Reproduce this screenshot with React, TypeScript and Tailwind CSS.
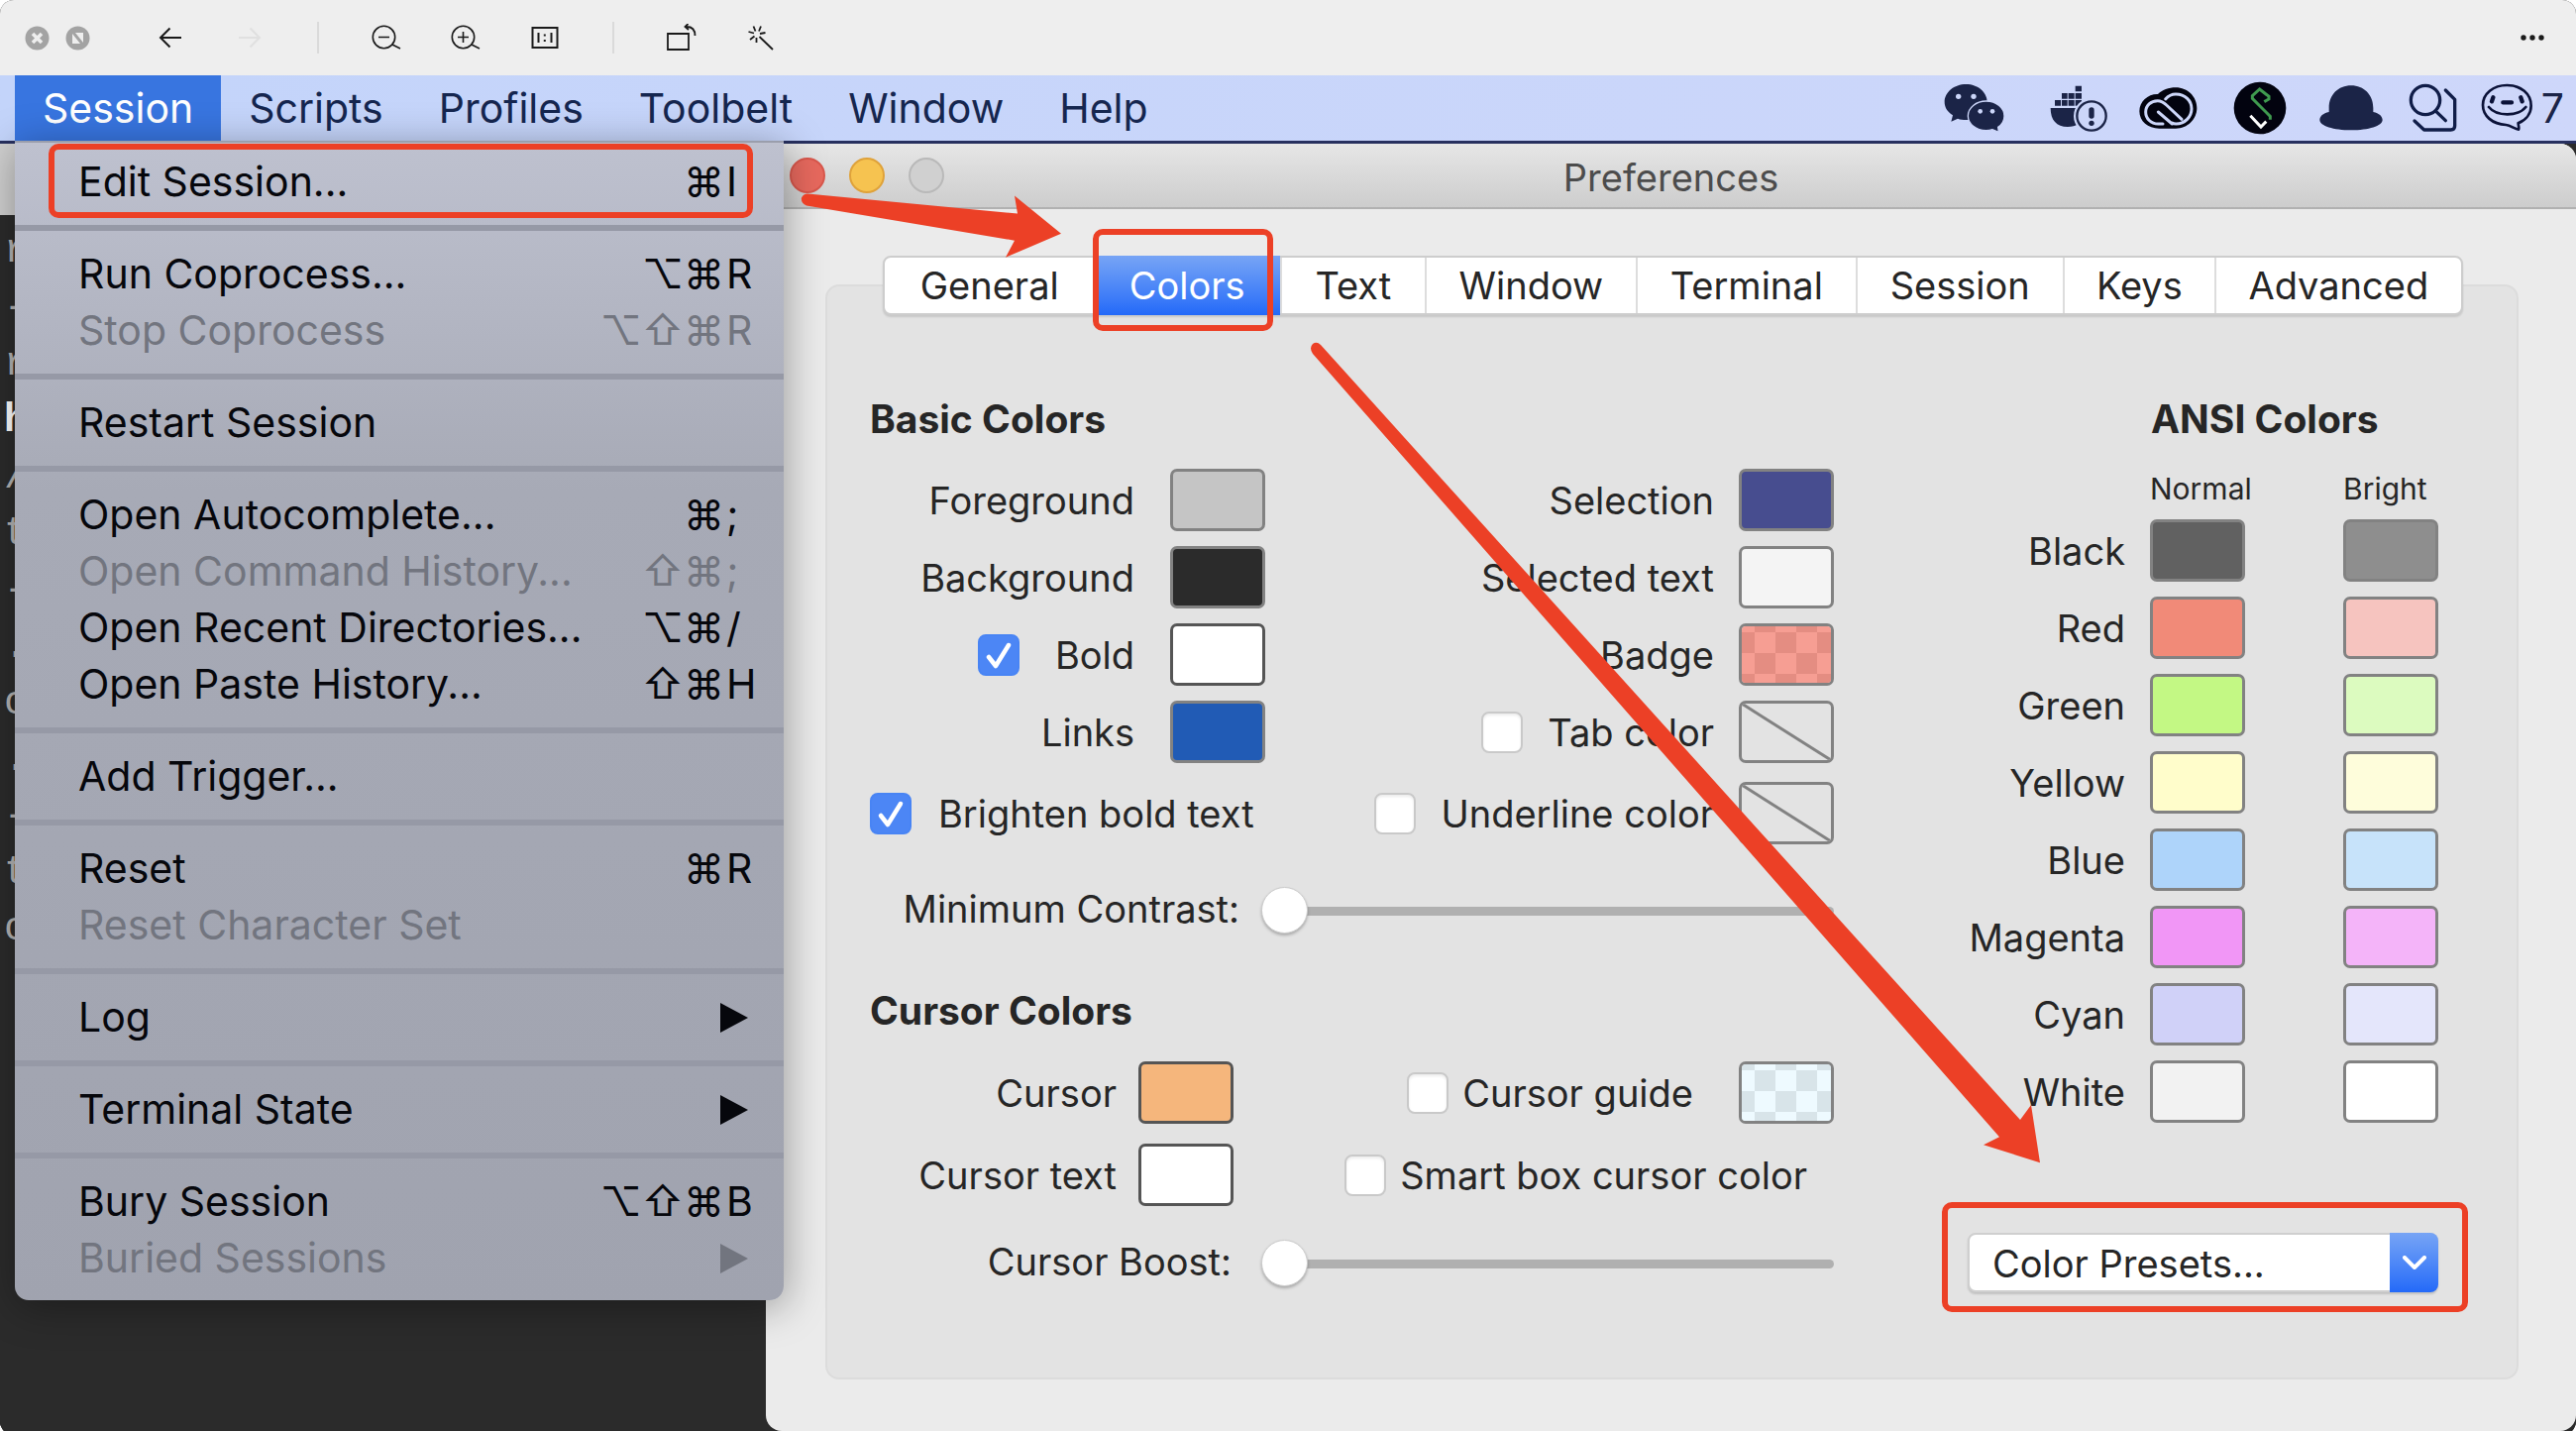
import React, { useState } from 'react';

const menuBarItems = ['Session', 'Scripts', 'Profiles', 'Toolbelt', 'Window', 'Help'];

type MenuEntry = {
  label: string;
  mods?: string;
  char?: string;
  disabled?: boolean;
  submenu?: boolean;
  marked?: boolean;
};

const menuGroups: MenuEntry[][] = [
  [{ label: 'Edit Session...', mods: '⌘', char: 'I', marked: true }],
  [
    { label: 'Run Coprocess...', mods: '⌥⌘', char: 'R' },
    { label: 'Stop Coprocess', mods: '⌥⇧⌘', char: 'R', disabled: true },
  ],
  [{ label: 'Restart Session' }],
  [
    { label: 'Open Autocomplete...', mods: '⌘', char: ';' },
    { label: 'Open Command History...', mods: '⇧⌘', char: ';', disabled: true },
    { label: 'Open Recent Directories...', mods: '⌥⌘', char: '/' },
    { label: 'Open Paste History...', mods: '⇧⌘', char: 'H' },
  ],
  [{ label: 'Add Trigger...' }],
  [
    { label: 'Reset', mods: '⌘', char: 'R' },
    { label: 'Reset Character Set', disabled: true },
  ],
  [{ label: 'Log', submenu: true }],
  [{ label: 'Terminal State', submenu: true }],
  [
    { label: 'Bury Session', mods: '⌥⇧⌘', char: 'B' },
    { label: 'Buried Sessions', disabled: true, submenu: true },
  ],
];

const terminalLines = ['r', '-', 'r', 'h', '/', 't', '-', '.', 'c', '.', '-', 't', 'c'];

const tabs = ['General', 'Colors', 'Text', 'Window', 'Terminal', 'Session', 'Keys', 'Advanced'];

const ansiColors = [
  { name: 'Black', normal: 'bg-[#616161]', bright: 'bg-[#8e8e8e]' },
  { name: 'Red', normal: 'bg-[#f18a78]', bright: 'bg-[#f6c4bf]' },
  { name: 'Green', normal: 'bg-[#c3f884]', bright: 'bg-[#dcfbbf]' },
  { name: 'Yellow', normal: 'bg-[#fffdcb]', bright: 'bg-[#fefddb]' },
  { name: 'Blue', normal: 'bg-[#aed4fa]', bright: 'bg-[#c7e3fa]' },
  { name: 'Magenta', normal: 'bg-[#f196f6]', bright: 'bg-[#f4b4f9]' },
  { name: 'Cyan', normal: 'bg-[#d0d1f8]', bright: 'bg-[#e4e6fb]' },
  { name: 'White', normal: 'bg-[#f2f2f2]', bright: 'bg-white' },
];

function ToolButton({ label, children }: { label: string; children: React.ReactNode }) {
  return (
    <button aria-label={label} className="flex h-10 w-20 items-center justify-center">
      {children}
    </button>
  );
}

function ViewerToolbar() {
  return (
    <header className="flex h-[76px] items-center bg-[#eeeeee] pl-[25px] pr-[26px] text-[#1a1a1a]">
      <div className="flex w-[107px] gap-4">
        <button aria-label="Close">
          <svg width="25" height="25" viewBox="0 0 25 25">
            <circle cx="12.5" cy="12.5" r="12" fill="#a3a3a3" />
            <path d="M8 8l9 9M17 8l-9 9" stroke="#eee" strokeWidth="3.6" />
          </svg>
        </button>
        <button aria-label="Full screen">
          <svg width="25" height="25" viewBox="0 0 25 25">
            <circle cx="12.5" cy="12.5" r="12" fill="#a3a3a3" />
            <path d="M10 7h8v10zM7 8v10h8z" fill="#eee" />
          </svg>
        </button>
      </div>
      <ToolButton label="Back">
        <svg width="24" height="22" viewBox="0 0 24 22" fill="none" stroke="currentColor" strokeWidth="2">
          <path d="M23 11H2M11.500 1.500L2 11l9.500 9.500" />
        </svg>
      </ToolButton>
      <ToolButton label="Forward">
        <svg width="24" height="22" viewBox="0 0 24 22" fill="none" stroke="#e0e0e0" strokeWidth="2">
          <path d="M1 11h21M12.500 1.500L22 11l-9.500 9.500" />
        </svg>
      </ToolButton>
      <span className="mx-7 h-8 w-0.5 bg-[#dadada]" />
      <ToolButton label="Zoom out">
        <svg width="30" height="26" viewBox="0 0 30 26" fill="none" stroke="currentColor" strokeWidth="1.600">
          <circle cx="12.500" cy="12.500" r="11.200" />
          <path d="M7 12.500h11M21 20l8 4" />
        </svg>
      </ToolButton>
      <ToolButton label="Zoom in">
        <svg width="30" height="26" viewBox="0 0 30 26" fill="none" stroke="currentColor" strokeWidth="1.600">
          <circle cx="12.500" cy="12.500" r="11.200" />
          <path d="M7 12.500h11M12.500 7v11M21 20l8 4" />
        </svg>
      </ToolButton>
      <ToolButton label="Actual size">
        <svg width="28" height="24" viewBox="0 0 28 24" fill="none" stroke="currentColor" strokeWidth="2">
          <path d="M1.500 2h25v20h-25zM7.500 7v10M20.500 7v10M13.800 8.500v2M13.800 14v2" />
        </svg>
      </ToolButton>
      <span className="mx-7 h-8 w-0.5 bg-[#dadada]" />
      <ToolButton label="Rotate">
        <svg width="32" height="28" viewBox="0 0 32 28" fill="none" stroke="currentColor" strokeWidth="1.800">
          <path d="M2 10h21v16H2zM21 3c5 0 8.500 3 8.500 9M22.500 0L19.500 3l3.500 3" />
        </svg>
      </ToolButton>
      <ToolButton label="Enhance">
        <svg width="28" height="28" viewBox="0 0 28 28" fill="none" stroke="currentColor" strokeWidth="1.800">
          <path d="M12.500 13L26 26M6.500 2.500L8.500 7.500M14 2.500L12 7.500M1.500 8l5.500 1.500M18.500 9L13 10M3 16l4.500-3.500M9.500 19v-5" />
        </svg>
      </ToolButton>
      <button aria-label="More" className="ml-auto flex h-10 w-9 items-center justify-center">
        <svg width="24" height="6" viewBox="0 0 24 6" fill="currentColor">
          <circle cx="3" cy="3" r="2.700" />
          <circle cx="12" cy="3" r="2.700" />
          <circle cx="21" cy="3" r="2.700" />
        </svg>
      </button>
    </header>
  );
}

function StatusIcons() {
  return (
    <div className="ml-auto flex items-center pr-3 text-[#1b2447]">
      <svg className="mr-[45px]" width="62" height="50" viewBox="36 42 186 150" role="img" aria-label="WeChat">
        <path
          d="M103 45c36 0 64 24 64 54s-28 54-64 54c-9 0-17-1-25-4l-20 9 5-19C47 129 38 115 38 99c0-30 29-54 65-54z"
          fill="currentColor"
        />
        <circle cx="80" cy="82" r="8" fill="#ccd6f9" />
        <circle cx="126" cy="82" r="8" fill="#ccd6f9" />
        <path
          d="M164 96c31 0 55 20 55 45 0 14-7 26-19 34l2 15-19-8c-6 2-12 3-19 3-31 0-55-20-55-44s24-45 55-45z"
          fill="currentColor"
          stroke="#ccd6f9"
          strokeWidth="4"
        />
        <circle cx="146" cy="127" r="7" fill="#ccd6f9" />
        <circle cx="183" cy="127" r="7" fill="#ccd6f9" />
      </svg>
      <svg className="mr-[31px]" width="59" height="50" viewBox="356 47 177 150" role="img" aria-label="Docker">
        <path
          d="M433 55h19v17h-19zM392 77h17v17h-17zM412 77h18v17h-18zM433 77h19v17h-19zM371 98h18v17h-18zM392 98h17v17h-17zM412 98h18v17h-18zM433 98h19v17h-19zM358 122h86v48c-10 6-22 9-34 9-34 0-52-20-52-57z"
          fill="currentColor"
        />
        <circle cx="482" cy="146" r="54" fill="#ccd6f9" />
        <circle cx="482" cy="146" r="44" fill="none" stroke="currentColor" strokeWidth="7" />
        <path d="M482 128v18" stroke="currentColor" strokeWidth="16" strokeLinecap="round" />
        <circle cx="482" cy="168" r="8" fill="currentColor" />
      </svg>
      <svg className="mr-9" width="59" height="50" viewBox="626 35 177 150" role="img" aria-label="Creative Cloud">
        <path
          d="M683 68c12-12 33-20 54-20 36 0 64 28 64 62s-28 62-64 62h-50c-34 0-60-22-60-52s26-53 56-52z"
          fill="#02030f"
        />
        <path
          d="M684 122l42 36M698 158h-14c-22 0-38-16-38-36s16-34 36-34c10 0 18 4 27 13l46 43M706 83c8-9 19-15 31-15 29 0 48 20 48 44s-20 46-47 46c-5 0-9-1-12-3"
          fill="none"
          stroke="#ccd6f9"
          strokeWidth="9"
          strokeLinecap="round"
          strokeLinejoin="round"
        />
      </svg>
      <svg className="mr-[33px]" width="54" height="54" viewBox="0 0 162 162" role="img" aria-label="Sync">
        <circle cx="81" cy="81" r="79" fill="#02030f" />
        <path d="M112 116V106L58 52V44L80 24L108 46V54L94 62" fill="none" stroke="#3f9a4f" strokeWidth="9" />
        <path d="M52 104l32 34 16-16" fill="none" stroke="#fff" strokeWidth="9" />
      </svg>
      <svg className="mr-[26px]" width="64" height="46" viewBox="198 53 192 138" role="img" aria-label="Bartender">
        <path
          d="M227 134v-12c0-40 28-68 67-68s67 28 67 68v12c18 4 28 13 28 24 0 18-42 31-95 31s-95-13-95-31c0-11 10-20 28-24z"
          fill="currentColor"
        />
      </svg>
      <svg
        className="mr-6"
        width="49"
        height="50"
        viewBox="468 42 147 150"
        fill="none"
        stroke="#101d48"
        strokeWidth="10"
        strokeLinecap="round"
        role="img"
        aria-label="Search"
      >
        <circle cx="519" cy="93" r="44" />
        <path d="M551 127l29 28M580 63l28 28v80q0 12-12 12h-81l-29-27" strokeLinejoin="round" />
      </svg>
      <svg
        width="53"
        height="50"
        viewBox="688 42 159 150"
        fill="none"
        stroke="#0b1238"
        strokeWidth="8"
        role="img"
        aria-label="Messages"
      >
        <path d="M801 163c24-10 39-30 39-53 0-36-31-62-73-62s-73 26-73 60c0 33 29 58 70 60 14 1 27 13 38 14 3-5-1-12-1-19z" />
        <path d="M712 114c12 15 30 22 56 22s44-7 56-22" strokeLinecap="round" />
        <path d="M755 100h26M725 85l-4 12M809 85l4 12" strokeWidth="13" strokeLinecap="round" />
      </svg>
      <span className="ml-2 text-[41px] leading-[48px]">7</span>
    </div>
  );
}

function MenuBar() {
  return (
    <nav className="flex h-[69px] items-stretch border-b-[3px] border-[#27305f] bg-linear-to-r from-[#c3d4fa] to-[#ced7fa] pl-[15px] text-[41px] leading-[48px] text-[#15264f]">
      {menuBarItems.map((item, i) => (
        <button key={item} className={i === 0 ? 'bg-[#3875e0] px-7 text-white' : 'px-7'}>
          {item}
        </button>
      ))}
      <StatusIcons />
    </nav>
  );
}

function SessionMenu() {
  return (
    <div
      role="menu"
      className="absolute left-[15px] top-[142px] z-20 w-[776px] rounded-b-[14px] border-t-2 border-[#9a9eac] bg-linear-to-b from-[#bec1cf] via-[#a7aab6] via-30% to-[#a0a3af] pb-3.5 pt-[11px] text-[41px] leading-[57px] text-[#06070c] shadow-[2px_6px_40px_rgba(0,0,0,0.35)]"
    >
      {menuGroups.map((group, gi) => (
        <React.Fragment key={group[0].label}>
          {gi > 0 && (
            <div role="separator" className="py-[15px]">
              <div className="h-1.5 bg-[#9699a6]" />
            </div>
          )}
          {group.map((entry) => (
            <button
              key={entry.label}
              role="menuitem"
              disabled={entry.disabled}
              className="relative flex h-[57px] w-full items-center whitespace-nowrap pl-16 pr-6 text-left disabled:text-[#72757f]"
            >
              {entry.label}
              {entry.mods && <span className="ml-auto">{entry.mods}</span>}
              {entry.char && <span className="ml-0.5 w-[34px]">{entry.char}</span>}
              {entry.submenu && (
                <svg className="ml-auto mr-3" width="28" height="30" viewBox="0 0 28 30" fill="currentColor">
                  <path d="M0 0l28 15L0 30z" />
                </svg>
              )}
              {entry.marked && (
                <span className="pointer-events-none absolute -bottom-2 -top-2.5 left-[34px] right-[31px] rounded-[10px] border-[6px] border-[#ec4026]" />
              )}
            </button>
          ))}
        </React.Fragment>
      ))}
    </div>
  );
}

function Terminal() {
  return (
    <div className="w-[773px] shrink-0 overflow-hidden bg-[#2b2b2b] font-['Liberation_Mono'] text-[40px] text-[#b4b4b4]">
      <div className="h-[72px] bg-[#cfcfcf]" />
      <div className="pl-1 pt-2 leading-[57px]">
        {terminalLines.map((line, i) => (
          <div key={i} className={line === 'h' ? 'font-bold text-white' : ''}>
            {line}
          </div>
        ))}
      </div>
    </div>
  );
}

function Swatch({ label, tone }: { label: string; tone: string }) {
  return (
    <button
      aria-label={label}
      className={`block h-[63px] w-24 shrink-0 overflow-hidden rounded-[7px] border-[3px] ${tone}`}
    />
  );
}

function EmptySwatch({ label }: { label: string }) {
  return (
    <button aria-label={label} className="block h-[63px] w-24 shrink-0 overflow-hidden rounded-[7px] border-[3px] border-[#828282]">
      <svg className="h-full w-full" viewBox="0 0 90 57" preserveAspectRatio="none">
        <path d="M0 0L90 57" stroke="#828282" strokeWidth="3" />
      </svg>
    </button>
  );
}

function CheckerSwatch({ label, even, odd }: { label: string; even: string; odd: string }) {
  const cells = [0, 1, 2, 3, 4].flatMap((c) =>
    [0, 1, 2, 3].filter((r) => (c + r) % 2 === 1).map((r) => ({ x: c * 21 - 8, y: r * 21 - 15 })),
  );
  return (
    <button aria-label={label} className="block h-[63px] w-24 shrink-0 overflow-hidden rounded-[7px] border-[3px] border-[#828282]">
      <svg className="h-full w-full" viewBox="0 0 90 57">
        <rect width="90" height="57" fill={even} />
        {cells.map((c) => (
          <rect key={`${c.x}-${c.y}`} x={c.x} y={c.y} width="21" height="21" fill={odd} />
        ))}
      </svg>
    </button>
  );
}

function CheckBox({ id, checked = false }: { id: string; checked?: boolean }) {
  return (
    <span className="relative block h-[42px] w-[42px] shrink-0">
      <input
        id={id}
        type="checkbox"
        defaultChecked={checked}
        className="peer block h-full w-full appearance-none rounded-lg border-2 border-[#c9c9c9] bg-white shadow-[inset_0_2px_3px_rgba(0,0,0,0.08)] checked:border-[#4884f4] checked:bg-[#4c86f5] checked:shadow-none"
      />
      <svg
        className="pointer-events-none absolute inset-0 hidden peer-checked:block"
        viewBox="0 0 42 42"
        fill="none"
        stroke="#fff"
        strokeWidth="4.500"
        strokeLinecap="round"
        strokeLinejoin="round"
      >
        <path d="M11 23l7 9L31 11" />
      </svg>
    </span>
  );
}

function Slider({ id }: { id: string }) {
  return (
    <input
      id={id}
      type="range"
      defaultValue={0}
      className="h-12 min-w-0 flex-1 appearance-none bg-transparent [&::-webkit-slider-runnable-track]:h-[9px] [&::-webkit-slider-runnable-track]:rounded-full [&::-webkit-slider-runnable-track]:bg-[#b0b0b0] [&::-webkit-slider-thumb]:-mt-5 [&::-webkit-slider-thumb]:h-[47px] [&::-webkit-slider-thumb]:w-[47px] [&::-webkit-slider-thumb]:appearance-none [&::-webkit-slider-thumb]:rounded-full [&::-webkit-slider-thumb]:border [&::-webkit-slider-thumb]:border-[#cccccc] [&::-webkit-slider-thumb]:bg-white [&::-webkit-slider-thumb]:shadow-[0_2px_3px_rgba(0,0,0,0.25)]"
    />
  );
}

const rowClass = 'flex h-[63px] items-center justify-end';
const headingClass = 'text-[39px] font-bold leading-[48px]';
const sliderLabelClass = 'w-[373px] whitespace-nowrap pb-1 text-right leading-[44px]';

function BasicColors() {
  return (
    <section>
      <h2 className={headingClass}>Basic Colors</h2>
      <div className="mt-[26px] flex justify-between">
        <div className="flex w-[399px] flex-col gap-[15px]">
          <div className={`${rowClass} gap-9`}>
            <span>Foreground</span>
            <Swatch label="Foreground" tone="border-[#828282] bg-[#c5c5c5]" />
          </div>
          <div className={`${rowClass} gap-9`}>
            <span>Background</span>
            <Swatch label="Background" tone="border-[#828282] bg-[#2b2b2b]" />
          </div>
          <div className={`${rowClass} gap-9`}>
            <CheckBox id="bold" checked />
            <label htmlFor="bold">Bold</label>
            <Swatch label="Bold" tone="border-[#555555] bg-white" />
          </div>
          <div className={`${rowClass} gap-9`}>
            <span>Links</span>
            <Swatch label="Links" tone="border-[#828282] bg-[#215bb5]" />
          </div>
          <div className="mt-1 flex h-[63px] items-center gap-[27px] whitespace-nowrap">
            <CheckBox id="brighten" checked />
            <label htmlFor="brighten">Brighten bold text</label>
          </div>
        </div>
        <div className="flex flex-col gap-[15px]">
          <div className={`${rowClass} gap-[25px]`}>
            <span>Selection</span>
            <Swatch label="Selection" tone="border-[#828282] bg-[#474d8f]" />
          </div>
          <div className={`${rowClass} gap-[25px]`}>
            <span>Selected text</span>
            <Swatch label="Selected text" tone="border-[#828282] bg-[#f4f4f4]" />
          </div>
          <div className={`${rowClass} gap-[25px]`}>
            <span>Badge</span>
            <CheckerSwatch label="Badge" even="#f69e93" odd="#e48d82" />
          </div>
          <div className={`${rowClass} gap-[25px]`}>
            <CheckBox id="tab-color" />
            <label htmlFor="tab-color">Tab color</label>
            <EmptySwatch label="Tab color" />
          </div>
          <div className={`${rowClass} mt-1 gap-[25px]`}>
            <CheckBox id="underline-color" />
            <label htmlFor="underline-color">Underline color</label>
            <EmptySwatch label="Underline color" />
          </div>
        </div>
      </div>
      <div className="mt-[43px] flex items-center gap-[22px]">
        <label htmlFor="contrast" className={sliderLabelClass}>
          Minimum Contrast:
        </label>
        <Slider id="contrast" />
      </div>
    </section>
  );
}

function CursorColors() {
  return (
    <section className="mt-[53px]">
      <h2 className={headingClass}>Cursor Colors</h2>
      <div className="mt-[27px] flex justify-between">
        <div className="flex w-[367px] flex-col gap-5">
          <div className={`${rowClass} gap-[22px]`}>
            <span>Cursor</span>
            <Swatch label="Cursor" tone="border-[#555555] bg-[#f5b67c]" />
          </div>
          <div className={`${rowClass} gap-[22px]`}>
            <span>Cursor text</span>
            <Swatch label="Cursor text" tone="border-[#555555] bg-white" />
          </div>
        </div>
        <div className="flex flex-col gap-5">
          <div className={`${rowClass} gap-3.5`}>
            <CheckBox id="cursor-guide" />
            <label htmlFor="cursor-guide" className="mr-8">
              Cursor guide
            </label>
            <CheckerSwatch label="Cursor guide" even="#d8e4e9" odd="#eefaff" />
          </div>
          <div className={`${rowClass} gap-3.5 pr-[27px]`}>
            <CheckBox id="smart-box" />
            <label htmlFor="smart-box">Smart box cursor color</label>
          </div>
        </div>
      </div>
      <div className="mt-[34px] flex items-center gap-[22px]">
        <label htmlFor="boost" className={`${sliderLabelClass} pr-2`}>
          Cursor Boost:
        </label>
        <Slider id="boost" />
      </div>
    </section>
  );
}

function AnsiColors() {
  return (
    <section>
      <h2 className={`${headingClass} whitespace-nowrap pl-[185px]`}>ANSI Colors</h2>
      <table className="mt-7 w-full table-fixed border-collapse">
        <colgroup>
          <col />
          <col className="w-[195px]" />
          <col className="w-24" />
        </colgroup>
        <thead className="text-left text-[30px] leading-9">
          <tr>
            <td className="p-0" />
            <th scope="col" className="p-0 pb-[13px] font-normal">
              Normal
            </th>
            <th scope="col" className="p-0 pb-[13px] font-normal">
              Bright
            </th>
          </tr>
        </thead>
        <tbody>
          {ansiColors.map((c) => (
            <tr key={c.name}>
              <th scope="row" className="p-0 pb-[15px] pr-[25px] text-right font-normal">
                {c.name}
              </th>
              <td className="p-0 pb-[15px]">
                <Swatch label={`${c.name} normal`} tone={`border-[#828282] ${c.normal}`} />
              </td>
              <td className="p-0 pb-[15px]">
                <Swatch label={`${c.name} bright`} tone={`border-[#828282] ${c.bright}`} />
              </td>
            </tr>
          ))}
        </tbody>
      </table>
      <div className="relative mt-24">
        <select
          aria-label="Color presets"
          className="block h-[60px] w-full appearance-none rounded-lg border-2 border-[#cfcfcf] bg-white pl-[23px] pt-0.5 shadow-[0_2px_2px_rgba(0,0,0,0.15)]"
        >
          <option>Color Presets...</option>
        </select>
        <span className="pointer-events-none absolute inset-y-0 right-0 flex w-[49px] items-center justify-center rounded-r-lg bg-linear-to-b from-[#77a4f5] to-[#2369f8]">
          <svg width="24" height="14" viewBox="0 0 24 14" fill="none" stroke="#fff" strokeWidth="4" strokeLinecap="round" strokeLinejoin="round">
            <path d="M2 2l10 10L22 2" />
          </svg>
        </span>
        <span className="pointer-events-none absolute -bottom-5 -left-[26px] -right-[30px] -top-[31px] rounded-[10px] border-[6px] border-[#ec4026]" />
      </div>
    </section>
  );
}

function TabBar() {
  const [active, setActive] = useState('Colors');
  return (
    <div
      role="tablist"
      className="relative z-10 ml-[118px] mr-[114px] mt-[47px] grid h-[60px] grid-cols-[212fr_188fr_146fr_214fr_222fr_210fr_153fr_250fr] rounded-lg border-2 border-[#cdcdcd] bg-white shadow-[0_2px_2px_rgba(0,0,0,0.12)]"
    >
      {tabs.map((tab) => (
        <button
          key={tab}
          role="tab"
          aria-selected={tab === active}
          onClick={() => setActive(tab)}
          className={
            tab === active
              ? 'relative -my-0.5 bg-linear-to-b from-[#77a4f5] to-[#2369f8] text-white'
              : 'relative border-l-2 border-[#dddddd] first:border-l-0'
          }
        >
          {tab}
          {tab === active && (
            <span className="pointer-events-none absolute -bottom-4 -left-px -top-[27px] right-[7px] rounded-[10px] border-[6px] border-[#ec4026]" />
          )}
        </button>
      ))}
    </div>
  );
}

function PreferencesWindow() {
  return (
    <main className="mb-1 min-w-0 flex-1 rounded-2xl bg-[#ebebeb] pb-[52px] text-[38px] leading-[48px] text-[#262626]">
      <div className="grid h-[66px] grid-cols-[1fr_auto_1fr] items-center rounded-tr-2xl border-b-2 border-[#b1b1b1] bg-linear-to-b from-[#e6e6e6] to-[#cdcdcd] px-6">
        <div className="flex gap-6">
          <button aria-label="Close window" className="h-9 w-9 rounded-full border-2 border-[#d9574c] bg-[#e7695e]" />
          <button aria-label="Minimize window" className="h-9 w-9 rounded-full border-2 border-[#dfa23a] bg-[#f6c350]" />
          <button aria-label="Zoom window" className="h-9 w-9 rounded-full border-2 border-[#b9b9b9] bg-[#d0d0d0]" />
        </div>
        <h1 className="pt-1 text-[#4c4c4c]">Preferences</h1>
      </div>
      <TabBar />
      <div className="-mt-[31px] ml-[60px] mr-[58px] grid grid-cols-[973fr_475fr] gap-[135px] rounded-[14px] border-2 border-[#dcdcdc] bg-[#e3e3e3] pb-[86px] pl-[43px] pr-[79px] pt-[110px]">
        <div>
          <BasicColors />
          <CursorColors />
        </div>
        <AnsiColors />
      </div>
    </main>
  );
}

function Arrows() {
  return (
    <svg
      aria-hidden="true"
      className="pointer-events-none absolute inset-0 z-30 h-full w-full"
      viewBox="0 0 2600 1444"
      preserveAspectRatio="none"
      fill="#ec4026"
    >
      <path d="M815 195L1027 215L1024 197L1071 235L1015 259L1024 242L814 207Q808 204 809 199Q811 195 815 195z" />
      <path d="M1333 347L2039 1127L2050 1112L2059 1170L2002 1152L2018 1144L1325 356Q1321 350 1325 346Q1329 343 1333 347z" />
    </svg>
  );
}

export default function App() {
  return (
    <div className="bg-white font-['Inter',sans-serif]">
      <div className="relative flex min-h-screen flex-col overflow-hidden rounded-[14px] bg-[#222222]">
        <ViewerToolbar />
        <MenuBar />
        <div className="flex flex-1 items-stretch bg-[#2b2b2b]">
          <Terminal />
          <PreferencesWindow />
        </div>
        <SessionMenu />
        <Arrows />
      </div>
    </div>
  );
}
